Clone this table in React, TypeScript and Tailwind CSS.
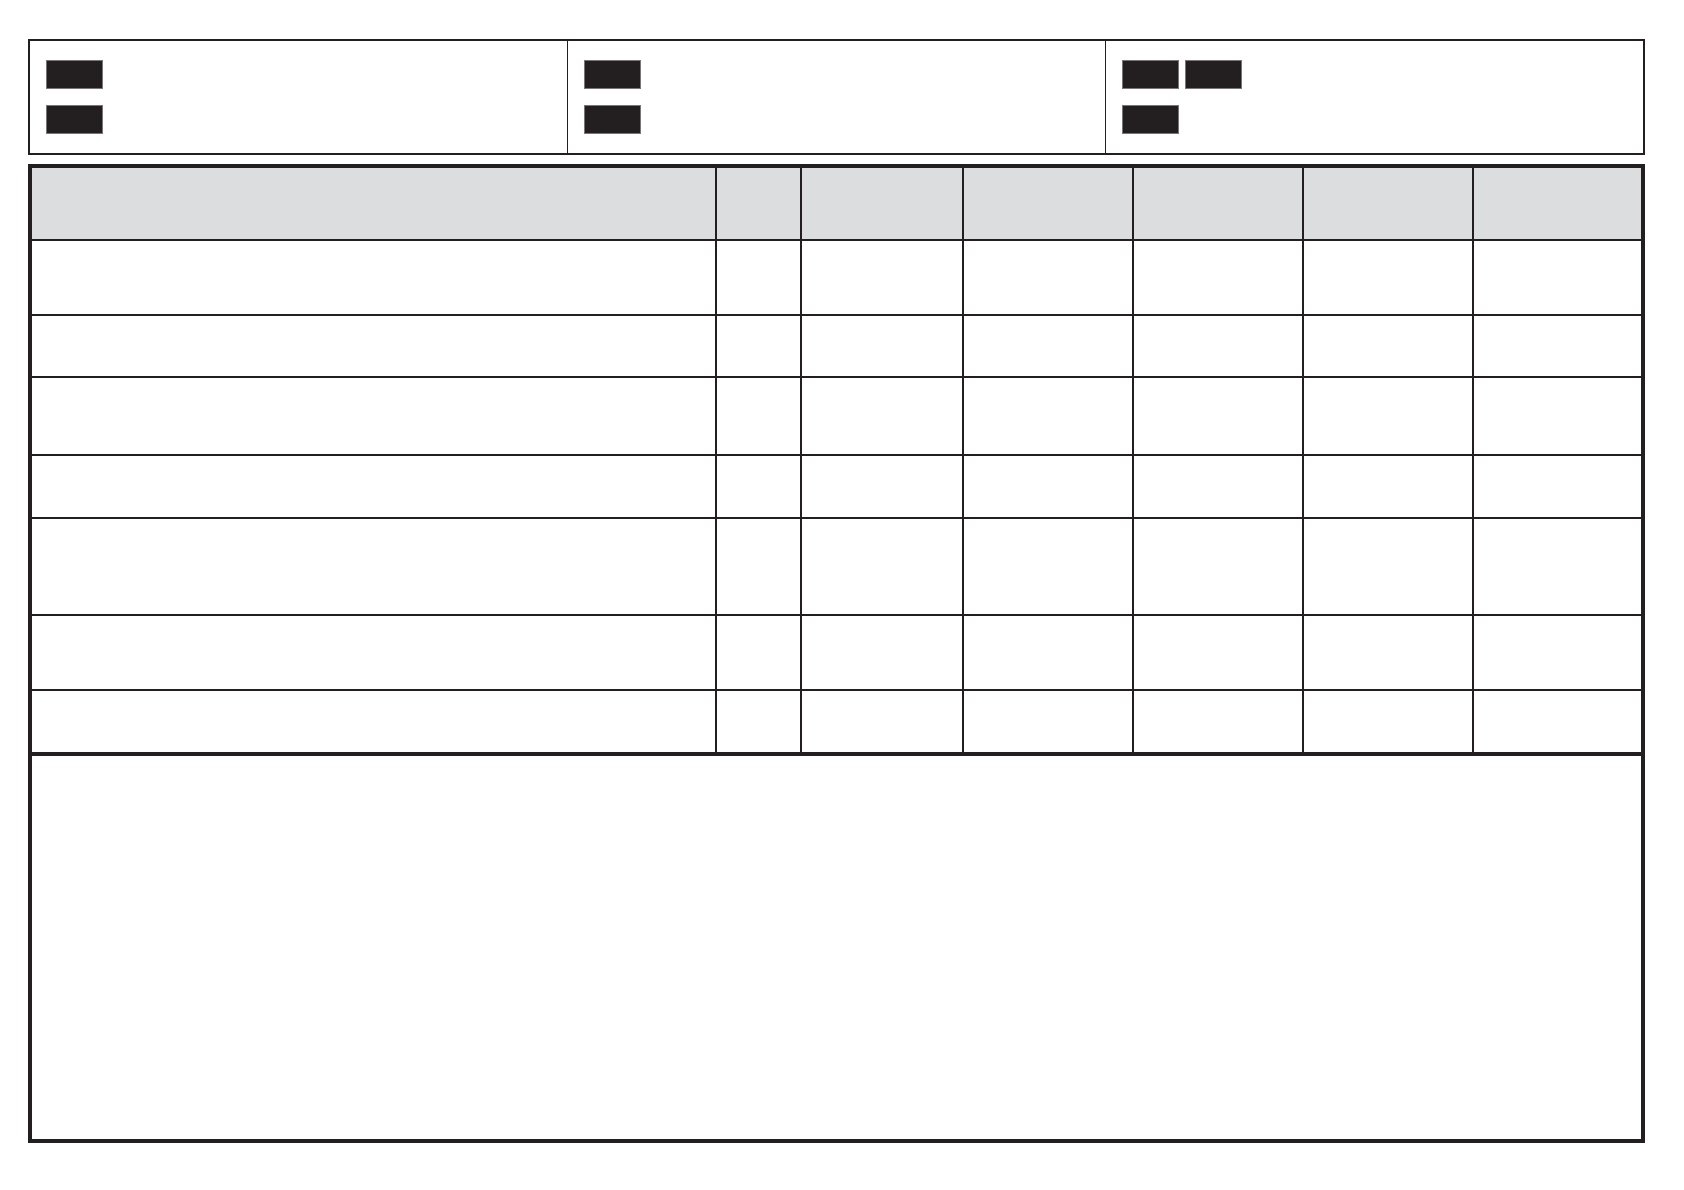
const cols = ["w-[685px]", "w-[85px]", "w-[162px]", "w-[170px]", "w-[170px]", "w-[170px]", "w-[167px]"];

// heights include the 2px bottom rule, except the last row
const rows = ["h-[75px]", "h-[62px]", "h-[78px]", "h-[63px]", "h-[97px]", "h-[75px]"];

function Tag() {
  return <div className="w-[57px] h-[29px] bg-[#231f20] border border-[#7a7677]" />;
}

function Row({ height, header, last }: { height: string; header?: boolean; last?: boolean }) {
  return (
    <div className={`flex ${height} ${last ? "" : "border-b-2 border-[#231f20]"} ${header ? "bg-[#dcdddf]" : ""}`}>
      {cols.map((w, i) => (
        <div key={i} className={`${w} h-full ${i < cols.length - 1 ? "border-r-2 border-[#231f20]" : ""}`} />
      ))}
    </div>
  );
}

export default function App() {
  return (
    <div className="w-[1684px] h-[1190px] bg-white pt-[39px] px-[28px]">
      <div className="w-[1617px] h-[116px] border-2 border-[#231f20] flex">
        <div className="w-[537px] pl-4 pt-[19px] flex flex-col gap-4">
          <Tag />
          <Tag />
        </div>
        <div className="w-[538px] border-l border-[#231f20] pl-4 pt-[19px] flex flex-col gap-4">
          <Tag />
          <Tag />
        </div>
        <div className="w-[538px] border-l border-[#231f20] pl-4 pt-[19px] flex flex-col gap-4">
          <div className="flex gap-[6px]">
            <Tag />
            <Tag />
          </div>
          <Tag />
        </div>
      </div>

      <div className="mt-[9px] w-[1617px] border-4 border-[#231f20]">
        <Row height="h-[73px]" header />
        {rows.map((h, i) => (
          <Row key={i} height={h} />
        ))}
        <Row height="h-[61px]" last />
        <div className="h-[387px] border-t-4 border-[#231f20]" />
      </div>
    </div>
  );
}
